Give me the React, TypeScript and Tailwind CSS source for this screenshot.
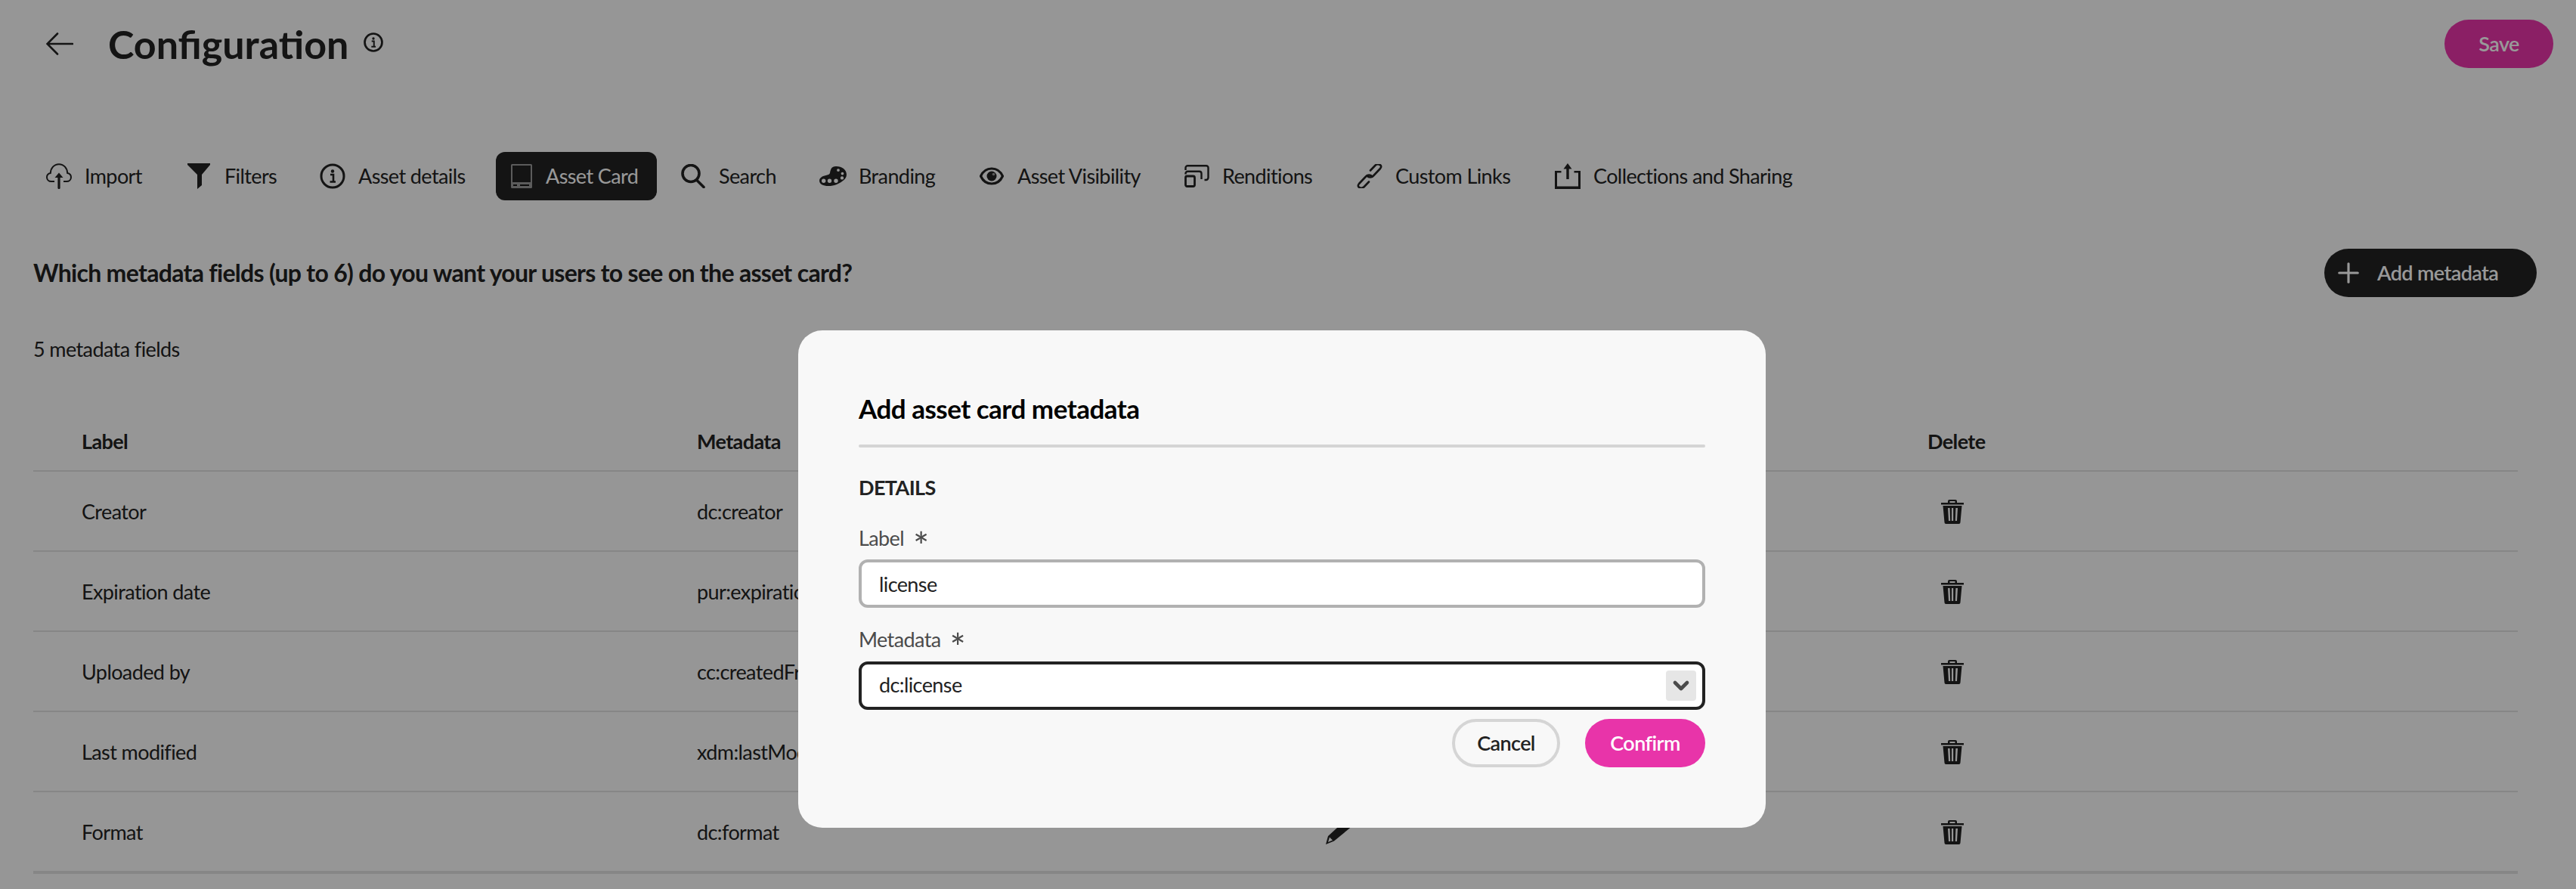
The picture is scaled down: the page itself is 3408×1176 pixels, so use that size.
import type { ReactNode } from 'react'
import { Plus, ChevronDown } from 'lucide-react'

function BackIcon() {
  return (
    <svg viewBox="0 0 36 30" className="w-[36px] h-[30px]" fill="none" stroke="currentColor" strokeWidth="2.600" strokeLinecap="round">
      <path d="M35 15H2M15 1.500 1.500 15 15 28.500" />
    </svg>
  )
}

function ImportIcon() {
  return (
    <svg viewBox="0 0 34 34" className="w-[34px] h-[34px]" fill="none" stroke="currentColor">
      <path d="M11 24H7c-3.500 0-6-2.400-6-5.500 0-2.900 2-5 4.800-5.500C6 6.500 10.500 1.200 17 1.200S28 6.500 28.200 13c2.800.5 4.800 2.600 4.800 5.500 0 3.100-2.500 5.500-6 5.500h-4" strokeWidth="2" />
      <path d="M17 32.500V16" strokeWidth="3.200" strokeLinecap="round" />
      <path d="M11.500 19 17 12.500 22.500 19Z" fill="currentColor" stroke="none" />
    </svg>
  )
}

function FilterIcon() {
  return (
    <svg viewBox="0 0 30 34" className="w-[30px] h-[34px]" fill="currentColor">
      <path d="M0 0h30v2L19 15v14l-6 5V15L0 2Z" />
    </svg>
  )
}

function InfoIcon({ size = 'w-[34px] h-[34px]', sw = 3 }: { size?: string; sw?: number }) {
  return (
    <svg viewBox="0 0 34 34" className={size} fill="none" stroke="currentColor">
      <circle cx="17" cy="17" r="15" strokeWidth={sw} />
      <circle cx="17" cy="10.500" r="2.200" fill="currentColor" stroke="none" />
      <path d="M14 15h4v9M13.500 24.500h7.500" strokeWidth="2.600" />
    </svg>
  )
}

function CardIcon() {
  return (
    <svg viewBox="0 0 28 32" className="w-[28px] h-[32px]" fill="none">
      <path fillRule="evenodd" d="M0 1.500A1.500 1.500 0 0 1 1.500 0h25A1.500 1.500 0 0 1 28 1.500v29a1.500 1.500 0 0 1-1.500 1.500h-25A1.500 1.500 0 0 1 0 30.500ZM2 2v22h24V2Z" fill="#9a9a9a" />
      <path d="M3 28h5M12 28h12" stroke="#141414" strokeWidth="2" />
    </svg>
  )
}

function SearchIcon() {
  return (
    <svg viewBox="0 0 32 32" className="w-[32px] h-[32px]" fill="none" stroke="currentColor" strokeWidth="3.600" strokeLinecap="round">
      <circle cx="13" cy="12.500" r="11" />
      <path d="m20.500 21 9.500 9.500" />
    </svg>
  )
}

function PaletteIcon() {
  return (
    <svg viewBox="0 0 36 26" className="w-[36px] h-[26px]" fill="currentColor">
      <path fillRule="evenodd" d="M22 0c8 0 14 4.500 14 11 0 3.300-2 6.500-6 9-4.500 3.300-10 6-18 6C5 26 0 23.500 0 19c0-4 4.500-6.500 9.500-7.300 2.500-.5 4-1 4.500-2.900C14.800 4 16 0 22 0Zm3 3.200a1.900 1.900 0 1 0 0 3.800 1.900 1.900 0 0 0 0-3.800Zm5.500 4.500a1.900 1.900 0 1 0 0 3.800 1.900 1.900 0 0 0 0-3.800Zm-.5 5.500a2.200 2.200 0 1 0 0 4.400 2.200 2.200 0 0 0 0-4.400ZM22 16.500a2.700 2.700 0 1 0 0 5.400 2.700 2.700 0 0 0 0-5.400Zm-8.500 0a2.700 2.700 0 1 0 0 5.400 2.700 2.700 0 0 0 0-5.400Zm-7.800 0a2.700 2.700 0 1 0 0 5.400 2.700 2.700 0 0 0 0-5.400Z" />
    </svg>
  )
}

function VisibilityIcon() {
  return (
    <svg viewBox="0 0 32 24" className="w-[32px] h-[24px]" fill="none">
      <path d="M1.500 12C4.500 5.500 10 2 16 2s11.500 3.500 14.500 10C27.500 18.500 22 22 16 22S4.500 18.500 1.500 12Z" stroke="currentColor" strokeWidth="3.200" />
      <circle cx="16" cy="12" r="6.500" fill="currentColor" />
      <circle cx="18.500" cy="9.500" r="1.800" fill="#969696" />
    </svg>
  )
}

function RenditionsIcon() {
  return (
    <svg viewBox="0 0 33 30" className="w-[33px] h-[30px]" fill="none" stroke="currentColor" strokeWidth="2.400">
      <path d="M1.500 7V4a2.800 2.800 0 0 1 2.800-2.800h24.200A2.800 2.800 0 0 1 31.500 4v13a3 3 0 0 1-3 3h-2" />
      <path d="M1.500 12.500v-1a2.800 2.800 0 0 1 2.800-2.800h15.400a2.800 2.800 0 0 1 2.800 2.800V19" />
      <rect x="1.500" y="15" width="12" height="13.500" rx="2" strokeWidth="2.800" />
    </svg>
  )
}

function LinkIcon() {
  return (
    <svg viewBox="0 0 34 32" className="w-[34px] h-[32px]" fill="none" stroke="currentColor" strokeWidth="2.600" strokeLinecap="round">
      <path d="M13.500 15.500c2.500 2.500 6 2.500 8.500 0l9-9.500c1.800-2 1.500-4-.3-5C28.500-.2 26 .2 24.200 2L18 8.500" />
      <path d="M20.500 16.500c-2.500-2.500-6-2.500-8.500 0l-9 9.500c-1.800 2-1.500 4 .3 5 2.200 1.200 4.700.8 6.500-1L16 23.500" />
    </svg>
  )
}

function ShareIcon() {
  return (
    <svg viewBox="0 0 34 34" className="w-[34px] h-[34px]" fill="currentColor">
      <path d="M17 0 22.500 7.500H18.700V21H15.300V7.500H11.500Z" />
      <path d="M0 10h8.500v2.500H3v18h28v-18h-5.500V10H34v24H0Z" />
    </svg>
  )
}

function TrashIcon() {
  return (
    <svg viewBox="0 0 30 32" className="w-[30px] h-[32px]" fill="currentColor">
      <path fillRule="evenodd" d="M9 4V2a2 2 0 0 1 2-2h8a2 2 0 0 1 2 2v2h9v2.500H0V4Zm2.500 0h7V2h-7ZM2.500 8h25L25.500 30a2 2 0 0 1-2 2h-17a2 2 0 0 1-2-2ZM9 11l1 17h2.200l-.6-17Zm5 0v17h2.200v-17Zm5.400 0-.6 17H21l1-17Z" />
    </svg>
  )
}

function PencilIcon() {
  return (
    <svg viewBox="0 0 36 32" className="w-[36px] h-[32px]" fill="currentColor">
      <path fillRule="evenodd" d="M26 0 36 7 11 27.500 0 32l3-11Zm-21 22.500-2 6.500 6-2.500Z" />
    </svg>
  )
}

const TABS: { label: string; width: string; icon: ReactNode; active?: boolean }[] = [
  { label: 'Import', width: 'w-[75px]', icon: <ImportIcon /> },
  { label: 'Filters', width: 'w-[67px]', icon: <FilterIcon /> },
  { label: 'Asset details', width: 'w-[140px]', icon: <InfoIcon /> },
  { label: 'Asset Card', width: 'w-[119px]', icon: <CardIcon />, active: true },
  { label: 'Search', width: 'w-[75px]', icon: <SearchIcon /> },
  { label: 'Branding', width: 'w-[100px]', icon: <PaletteIcon /> },
  { label: 'Asset Visibility', width: 'w-[161px]', icon: <VisibilityIcon /> },
  { label: 'Renditions', width: 'w-[119px]', icon: <RenditionsIcon /> },
  { label: 'Custom Links', width: 'w-[152px]', icon: <LinkIcon /> },
  { label: 'Collections and Sharing', width: 'w-[265px]', icon: <ShareIcon /> },
]

const ROWS = [
  { label: 'Creator', meta: 'dc:creator' },
  { label: 'Expiration date', meta: 'pur:expirationDate' },
  { label: 'Uploaded by', meta: 'cc:createdFromUser' },
  { label: 'Last modified', meta: 'xdm:lastModified' },
  { label: 'Format', meta: 'dc:format' },
]

const gridCls = 'grid grid-cols-[878px_824px_804px_1fr] items-center'

export default function App() {
  return (
    <div className="relative w-[3408px] h-[1176px] overflow-hidden bg-[#fafafa] pt-[26px] text-[#222222] text-[27px] tracking-[-0.6px] font-['Lato',sans-serif]">
      <div className="flex items-center justify-between h-[64px] pl-[61px] pr-[30px]">
        <div className="flex items-center">
          <BackIcon />
          <h1 className="ml-[46px] text-[52px] tracking-normal font-bold leading-[64px]">Configuration</h1>
          <span className="ml-[20px] -mt-[4px]"><InfoIcon size="w-[26px] h-[26px]" sw={3.500} /></span>
        </div>
        <button className="w-[144px] h-[64px] rounded-full bg-[#e834a9] text-white font-semibold">Save</button>
      </div>

      <div className="flex items-center gap-[14px] mt-[111px] pl-[44px]">
        {TABS.map((t) => (
          <div key={t.label} className={`flex items-center h-[64px] pl-4 pr-7 rounded-[12px] ${t.active ? 'bg-[#222222] text-white' : ''}`}>
            <span className={`flex items-center justify-center w-[36px] ${t.active ? 'mr-[14px]' : 'mr-[16px]'}`}>{t.icon}</span>
            <span className={`${t.width} whitespace-nowrap`}>{t.label}</span>
          </div>
        ))}
      </div>

      <div className="flex items-center justify-between mt-[64px] pl-[44px] pr-[52px]">
        <h2 className="text-[32px] tracking-[-0.7px] font-bold">Which metadata fields (up to 6) do you want your users to see on the asset card?</h2>
        <button className="flex items-center w-[281px] h-[64px] pl-[11px] rounded-full bg-[#222222] text-white font-semibold">
          <Plus size={42} strokeWidth={1.800} className="mr-[17px]" />
          Add metadata
        </button>
      </div>

      <div className="mt-[49px] pl-[44px] h-[40px] leading-[40px]">5 metadata fields</div>

      <div className="mt-[64px] ml-[44px] w-[3287px]">
        <div className={`${gridCls} h-[78px] border-b-2 border-[#dfdfdf] font-bold`}>
          <div className="pl-16">Label</div>
          <div>Metadata</div>
          <div>Edit</div>
          <div>Delete</div>
        </div>
        {ROWS.map((r, i) => (
          <div key={r.label} className={`${gridCls} ${i === ROWS.length - 1 ? 'h-[108px] border-b-4' : 'h-[106px] border-b-2'} pt-[2px] border-[#dfdfdf]`}>
            <div className="pl-16">{r.label}</div>
            <div>{r.meta}</div>
            <div className="pl-2"><PencilIcon /></div>
            <div className="pl-[18px]"><TrashIcon /></div>
          </div>
        ))}
      </div>

      {/* dim layer + dialog */}
      <div className="absolute inset-0 bg-black/40" />
      <div className="absolute left-[1056px] top-[437px] w-[1280px] h-[658px] rounded-[32px] bg-[#f8f8f8] px-[80px]">
        <h3 className="pt-[80px] text-[35px] tracking-[-0.5px] leading-[46px] font-bold text-black">Add asset card metadata</h3>
        <div className="mt-[25px] h-[4px] rounded-full bg-[#d5d5d5]" />
        <div className="mt-[35px] text-[27px] leading-[36px] font-bold">DETAILS</div>
        <label className="flex items-center mt-[31px] h-[36px] text-[#4b4b4b]">
          Label
          <span className="ml-[12px] text-[50px] leading-none translate-y-[10px]">*</span>
        </label>
        <input readOnly value="license" className="block w-full h-[64px] mt-[10px] px-[23px] rounded-[12px] border-4 border-[#b1b1b1] bg-white outline-none" />
        <label className="flex items-center mt-[24px] h-[36px] text-[#4b4b4b]">
          Metadata
          <span className="ml-[12px] text-[50px] leading-none translate-y-[10px]">*</span>
        </label>
        <div className="flex items-center justify-between h-[64px] mt-[11px] pl-[23px] pr-[8px] rounded-[12px] border-4 border-[#222222] bg-white">
          <span className="-mt-[2px]">dc:license</span>
          <span className="flex items-center justify-center w-[40px] h-[40px] rounded-[4px] bg-[#e6e6e6] text-[#4b4b4b]">
            <ChevronDown size={32} strokeWidth={3.500} />
          </span>
        </div>
        <div className="flex justify-end gap-[33px] mt-[12px]">
          <button className="w-[143px] h-[64px] rounded-full border-4 border-[#d5d5d5] font-semibold">Cancel</button>
          <button className="w-[159px] h-[64px] rounded-full bg-[#e834a9] text-white font-semibold">Confirm</button>
        </div>
      </div>
    </div>
  )
}
